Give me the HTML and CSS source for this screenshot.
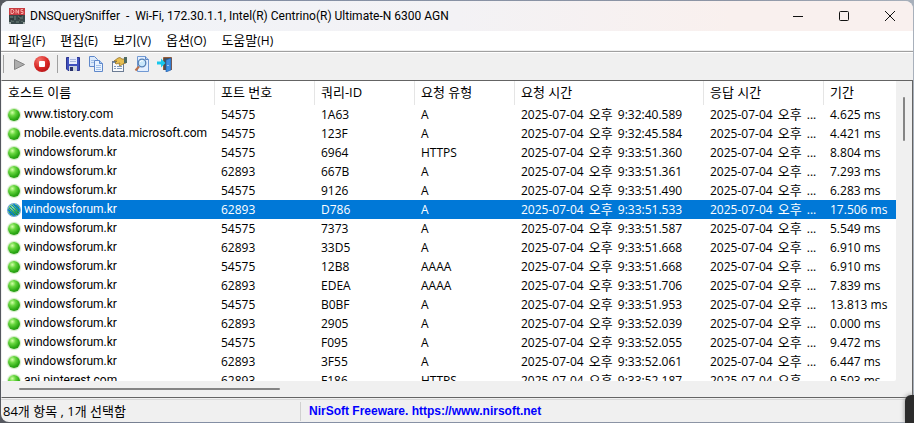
FILE: index.html
```html
<!DOCTYPE html>
<html lang="ko">
<head>
<meta charset="utf-8">
<title>DNSQuerySniffer</title>
<link rel="stylesheet" href="styles.css">
</head>
<body>
<div class="window">
  <header class="titlebar">
    <svg class="app-icon" width="16" height="16" viewBox="0 0 16 16" aria-hidden="true">
      <rect width="16" height="16" fill="#38484a"/>
      <rect width="16" height="7" fill="#c83c42"/>
      <path d="M2 1.500v4M2 1.500h2l1 2-1 2H2M7 5.500v-4l2.500 4v-4M14 1.500h-2v2h2v2h-2" fill="none" stroke="#f5a9a5"/>
      <path d="M1 9h3M6 8v4M9 9h2v4M13 8v6M2 13h3M7 14h3" stroke="#71867e"/>
      <path d="M1 11h2M10 8h3M4 10v3M11 12h3" stroke="#263033"/>
      <path d="M0 14h2v2H0zM14 14h2v2h-2z" fill="#9ba6a3"/>
    </svg>
    <h1 class="title">DNSQuerySniffer&nbsp; -&nbsp; Wi-Fi, 172.30.1.1, Intel(R) Centrino(R) Ultimate-N 6300 AGN</h1>
    <button class="caption" aria-label="최소화"><svg width="12" height="12" viewBox="0 0 12 12"><path d="M1 6.500h10" stroke="#111"/></svg></button>
    <button class="caption" aria-label="최대화"><svg width="12" height="12" viewBox="0 0 12 12"><rect x="1.500" y="1.500" width="9" height="9" rx="1" fill="none" stroke="#111"/></svg></button>
    <button class="caption" aria-label="닫기"><svg width="12" height="12" viewBox="0 0 12 12"><path d="M1 1l10 10M11 1L1 11" stroke="#111"/></svg></button>
  </header>
  <nav class="menubar">
    <button><b>파일</b>(F)</button><button><b>편집</b>(E)</button><button><b>보기</b>(V)</button><button><b>옵션</b>(O)</button><button><b>도움말</b>(H)</button>
  </nav>
  <div class="toolbar">
    <span class="sep"></span>
    <button aria-label="시작"><svg width="16" height="16" viewBox="0 0 16 16"><path d="M3.500 3.500v10l10-5z" fill="#adadad" stroke="#858585"/></svg></button>
    <button aria-label="중지"><svg width="16" height="16" viewBox="0 0 16 16"><defs><radialGradient id="red" cx=".35" cy=".25" r=".8"><stop offset="0" stop-color="#f3746c"/><stop offset=".6" stop-color="#d92926"/><stop offset="1" stop-color="#b81518"/></radialGradient></defs><circle cx="8" cy="8" r="8" fill="url(#red)"/><rect x="5" y="5" width="6" height="6" rx="1" fill="#fff"/></svg></button>
    <span class="sep"></span>
    <button aria-label="저장"><svg width="16" height="16" viewBox="0 0 16 16"><path d="M1.500 1.500h13v13H3l-1.500-1.500z" fill="#3f50bd" stroke="#2b348f"/><rect x="4" y="1" width="8" height="7" fill="#e8edfb"/><path d="M5 3.500h6M5 5.500h6" stroke="#a9b6dd"/><rect x="4" y="10" width="8" height="5" fill="#c9d0dc"/><rect x="5" y="11" width="3" height="4" fill="#273068"/></svg></button>
    <button aria-label="복사"><svg width="16" height="16" viewBox="0 0 16 16"><g stroke="#5f88ca"><path d="M1.500.5h5l3 3v7h-8z" fill="#dceafb"/><path d="M6.500 4.500h5l3 3v8h-8z" fill="#e9f3ff"/><path d="M11.500 4.500v3h3" fill="#a9c7ef"/></g><path d="M3 4.500h3M3 6.500h3M8 9.500h5M8 11.500h5M8 13.500h5" stroke="#a3c1e8"/></svg></button>
    <button aria-label="속성"><svg width="16" height="16" viewBox="0 0 16 16"><rect x="1.500" y="5.500" width="11" height="10" fill="#f7f9fc" stroke="#6c7c94"/><path d="M2 6.500h10" stroke="#7392bb"/><path d="M3 10.500h2M6 10.500h5M3 12.500h2M6 12.500h5" stroke="#819bbe"/><path d="M3 5l4-3 2-.5L11 3h4v4l-3 1-3 2-1-1 1-2-4 1-1-1 2-2z" fill="#e6bd4f" stroke="#8c6a20" stroke-width=".7"/><path d="M13 1h3v6h-3z" fill="#4e6a63"/></svg></button>
    <button aria-label="찾기"><svg width="16" height="16" viewBox="0 0 16 16"><path d="M3.500.5h8l3 3v12h-11z" fill="#e3efff" stroke="#7199d3"/><path d="M11.500.5v3h3" fill="#b3cdf1" stroke="#5c87c6"/><path d="M1.500 14.500L5 10.500" stroke="#bb704a" stroke-width="2"/><circle cx="8" cy="7" r="3.800" fill="#c9e7fb" stroke="#5680b5" stroke-width="1.300"/><path d="M6 6q1-2 3-1" fill="none" stroke="#fff"/></svg></button>
    <button aria-label="종료"><svg width="16" height="16" viewBox="0 0 16 16"><path d="M6.500 14V1.500h8V14" fill="#4b4f54" stroke="#965c38"/><path d="M9 4l5-2v12l-5 2z" fill="#3d8ee1" stroke="#1f56a2" stroke-width=".6"/><path d="M10.500 9.500h1" stroke="#fff"/><path d="M0 5.500h4v-3L8.500 7 4 11.500v-3H0z" fill="#17c8ed"/></svg></button>
  </div>
  <main class="list">
    <div class="rows">
      <table>
        <colgroup><col class="c-host"><col class="c-mid"><col class="c-mid"><col class="c-mid"><col class="c-time"><col class="c-reply"><col></colgroup>
        <thead><tr><th>호스트 이름</th><th>포트 번호</th><th>쿼리-ID</th><th>요청 유형</th><th>요청 시간</th><th>응답 시간</th><th>기간</th></tr></thead>
        <tbody>
          <tr><td><i class="dot"></i>www.tistory.com</td><td>54575</td><td>1A63</td><td>A</td><td>2025-07-04 <b>오후</b> 9:32:40.589</td><td>2025-07-04 <b>오후</b> ...</td><td>4.625 ms</td></tr>
          <tr><td><i class="dot"></i>mobile.events.data.microsoft.com</td><td>54575</td><td>123F</td><td>A</td><td>2025-07-04 <b>오후</b> 9:32:45.584</td><td>2025-07-04 <b>오후</b> ...</td><td>4.421 ms</td></tr>
          <tr><td><i class="dot"></i>windowsforum.kr</td><td>54575</td><td>6964</td><td>HTTPS</td><td>2025-07-04 <b>오후</b> 9:33:51.360</td><td>2025-07-04 <b>오후</b> ...</td><td>8.804 ms</td></tr>
          <tr><td><i class="dot"></i>windowsforum.kr</td><td>62893</td><td>667B</td><td>A</td><td>2025-07-04 <b>오후</b> 9:33:51.361</td><td>2025-07-04 <b>오후</b> ...</td><td>7.293 ms</td></tr>
          <tr><td><i class="dot"></i>windowsforum.kr</td><td>54575</td><td>9126</td><td>A</td><td>2025-07-04 <b>오후</b> 9:33:51.490</td><td>2025-07-04 <b>오후</b> ...</td><td>6.283 ms</td></tr>
          <tr class="selected"><td><i class="dot"></i>windowsforum.kr</td><td>62893</td><td>D786</td><td>A</td><td>2025-07-04 <b>오후</b> 9:33:51.533</td><td>2025-07-04 <b>오후</b> ...</td><td>17.506 ms</td></tr>
          <tr><td><i class="dot"></i>windowsforum.kr</td><td>54575</td><td>7373</td><td>A</td><td>2025-07-04 <b>오후</b> 9:33:51.587</td><td>2025-07-04 <b>오후</b> ...</td><td>5.549 ms</td></tr>
          <tr><td><i class="dot"></i>windowsforum.kr</td><td>62893</td><td>33D5</td><td>A</td><td>2025-07-04 <b>오후</b> 9:33:51.668</td><td>2025-07-04 <b>오후</b> ...</td><td>6.910 ms</td></tr>
          <tr><td><i class="dot"></i>windowsforum.kr</td><td>54575</td><td>12B8</td><td>AAAA</td><td>2025-07-04 <b>오후</b> 9:33:51.668</td><td>2025-07-04 <b>오후</b> ...</td><td>6.910 ms</td></tr>
          <tr><td><i class="dot"></i>windowsforum.kr</td><td>62893</td><td>EDEA</td><td>AAAA</td><td>2025-07-04 <b>오후</b> 9:33:51.706</td><td>2025-07-04 <b>오후</b> ...</td><td>7.839 ms</td></tr>
          <tr><td><i class="dot"></i>windowsforum.kr</td><td>54575</td><td>B0BF</td><td>A</td><td>2025-07-04 <b>오후</b> 9:33:51.953</td><td>2025-07-04 <b>오후</b> ...</td><td>13.813 ms</td></tr>
          <tr><td><i class="dot"></i>windowsforum.kr</td><td>62893</td><td>2905</td><td>A</td><td>2025-07-04 <b>오후</b> 9:33:52.039</td><td>2025-07-04 <b>오후</b> ...</td><td>0.000 ms</td></tr>
          <tr><td><i class="dot"></i>windowsforum.kr</td><td>54575</td><td>F095</td><td>A</td><td>2025-07-04 <b>오후</b> 9:33:52.055</td><td>2025-07-04 <b>오후</b> ...</td><td>9.472 ms</td></tr>
          <tr><td><i class="dot"></i>windowsforum.kr</td><td>62893</td><td>3F55</td><td>A</td><td>2025-07-04 <b>오후</b> 9:33:52.061</td><td>2025-07-04 <b>오후</b> ...</td><td>6.447 ms</td></tr>
          <tr><td><i class="dot"></i>api.pinterest.com</td><td>62893</td><td>F186</td><td>HTTPS</td><td>2025-07-04 <b>오후</b> 9:33:52.187</td><td>2025-07-04 <b>오후</b> ...</td><td>9.503 ms</td></tr>
        </tbody>
      </table>
    </div>
    <div class="vscroll"><div class="vthumb"></div></div>
    <div class="hscroll"><div class="hthumb"></div></div>
  </main>
  <footer class="status">
    <span class="count">84개 항목 , 1개 선택함</span>
    <a href="https://www.nirsoft.net">NirSoft Freeware. https://www.nirsoft.net</a>
  </footer>
</div>
<div class="behind"></div>
</body>
</html>
```
FILE: styles.css
```css
* { box-sizing: border-box; }
body {
  margin: 0;
  height: 100vh;
  overflow: hidden;
  padding: 1px;
  background: linear-gradient(90deg, #55585f, #838ea4 20%, #8d95a5 80%, #a8b0bb);
  font: 12px/19px "Open Sans", "Noto Sans CJK KR", sans-serif;
  color: #000;
}
button { border: 0; padding: 0; margin: 0; background: none; font: inherit; color: inherit; }
b { font-size: 13px; font-weight: 400; line-height: 1; }
svg { display: block; }
.window {
  height: 100%;
  display: flex;
  flex-direction: column;
  background: #f0f0f0;
  border-radius: 8px;
  overflow: hidden;
}
.titlebar {
  flex: 0 0 30px;
  display: flex;
  align-items: center;
  padding-left: 8px;
  background: linear-gradient(90deg, #f0f3f8, #f3f2f5 50%, #f9f0ee 80%);
}
.title {
  flex: 1;
  margin: 0 0 0 5px;
  font: 400 12px/19px Roboto, "Open Sans", sans-serif;
  white-space: nowrap;
}
.caption { width: 46px; height: 30px; display: flex; align-items: center; justify-content: center; }
.menubar {
  flex: 0 0 19px;
  display: flex;
  gap: 15px;
  padding-left: 7px;
  background: #fff;
}
.menubar button { white-space: nowrap; }
.toolbar {
  flex: 0 0 30px;
  display: flex;
  align-items: center;
  gap: 7px;
  padding-left: 2px;
  border-top: 1px solid #a0a0a0;
  box-shadow: inset 0 1px #fff;
  margin-top: 1px;
  margin-bottom: -1px;
  padding-bottom: 5px;
}
.toolbar .sep { width: 1px; height: 18px; background: #a0a0a0; }
.list {
  flex: 1;
  min-height: 0;
  display: grid;
  grid-template-columns: minmax(0, 1fr) 16px;
  grid-template-rows: minmax(0, 1fr) 16px;
  border: 1px solid #646464;
  border-left-color: #f0f0f0;
}
.rows { background: #fff; overflow: hidden; border-bottom-right-radius: 2px; }
table { width: 100%; border-collapse: separate; border-spacing: 0; table-layout: fixed; }
.c-host { width: 213px; }
.c-mid { width: 100px; }
.c-time { width: 189px; }
.c-reply { width: 120px; }
th, td { padding: 0 0 0 6px; text-align: left; font-weight: 400; white-space: nowrap; }
th { height: 24px; padding-bottom: 2px; font-size: 13px; border-right: 1px solid #e5e5e5; }
th:last-child { border-right: 0; }
td { height: 19px; line-height: 19px; }
td:first-child { font-family: Roboto, "Open Sans", sans-serif; }
td b { margin: 0 2px; }
.dot {
  display: inline-block;
  width: 12px;
  height: 12px;
  margin-right: 4px;
  vertical-align: -3px;
  border-radius: 50%;
  background: radial-gradient(circle at 36% 30%, #d2ffa8 0, #68d73f 28%, #2ca914 62%, #137a0b 100%);
  box-shadow: 0 0 1px 1px #cbe9bb;
}
.selected td { background: #0078d7; color: #fff; }
.selected td:first-child { background: linear-gradient(90deg, #fff 20px, #0078d7 20px); }
.selected .dot {
  background:
    repeating-linear-gradient(45deg, #0078d7 0 1px, transparent 1px 2px),
    radial-gradient(circle at 36% 30%, #a8e89a 0, #45b83a 40%, #137a0b 100%);
  box-shadow: 0 0 0 1px #6aa5cc;
}
.vscroll { padding: 16px 0 0 7px; }
.vthumb { width: 2px; height: 44px; background: #858585; border-radius: 1px; }
.hscroll { grid-column: 1 / -1; padding: 7px 0 0 17px; }
.hthumb { width: 261px; height: 2px; background: #858585; border-radius: 1px; }
.status {
  flex: 0 0 23px;
  display: flex;
  align-items: center;
  margin-top: 1px;
  border-top: 1px solid #d8d8d8;
  padding-left: 2px;
}
.count { width: 298px; font-size: 13px; border-right: 1px solid #d0d0d0; }
.status a { margin-left: 8px; font: bold 12px/19px "Liberation Sans", sans-serif; color: #00f; text-decoration: none; }
.behind {
  position: absolute;
  right: 0;
  bottom: 0;
  width: 9px;
  height: 28px;
  background: #2b2b2b;
  border-top-left-radius: 6px;
  box-shadow: 0 0 5px #888;
}
```
